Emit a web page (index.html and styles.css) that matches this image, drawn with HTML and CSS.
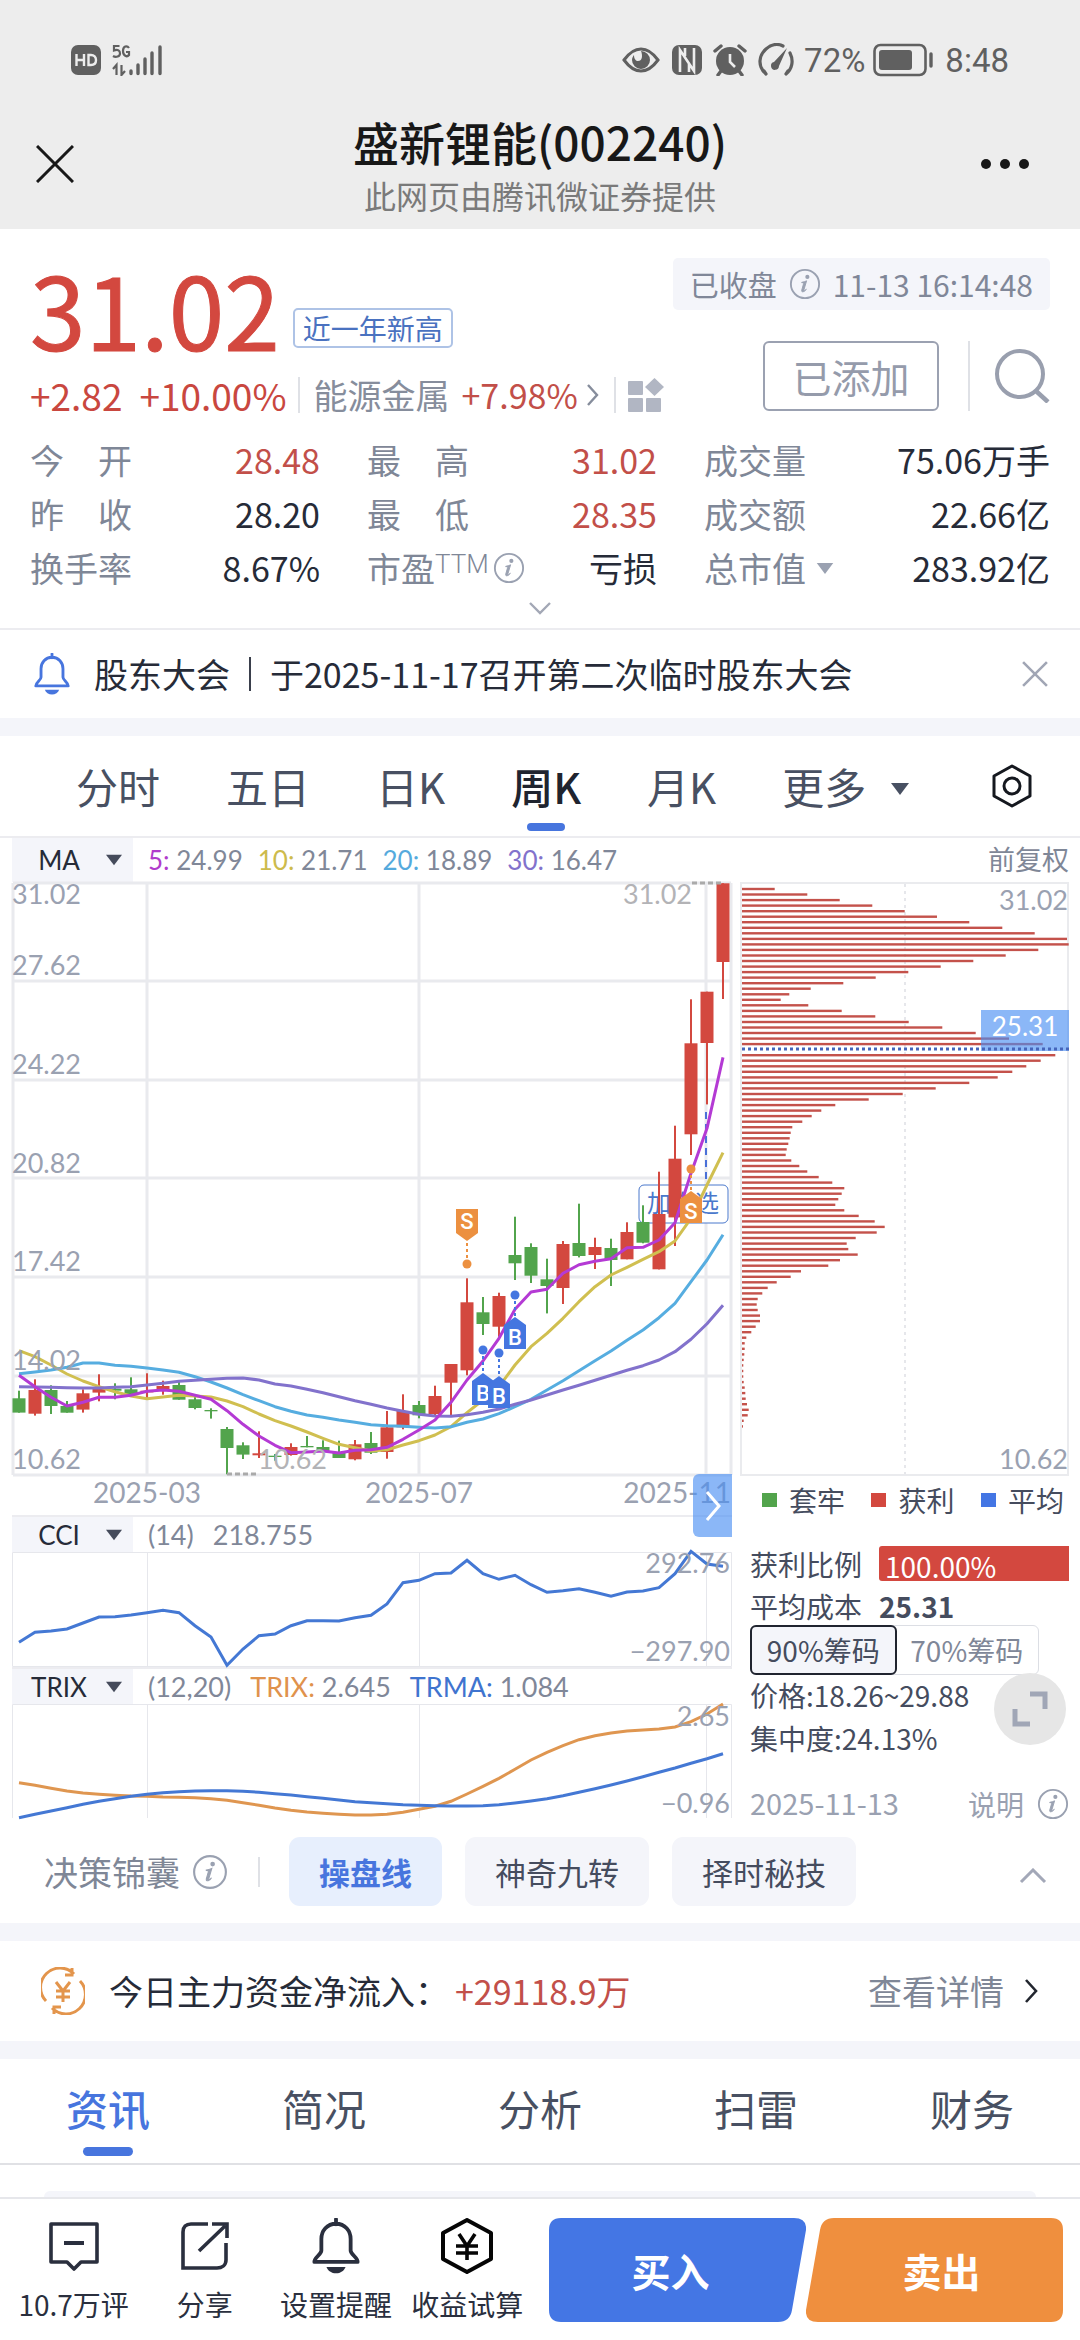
FILE: index.html
```html
<!DOCTYPE html>
<html lang="zh-CN">
<head>
<meta charset="utf-8">
<meta name="viewport" content="width=device-width">
<title>盛新锂能(002240)</title>
<link rel="stylesheet" href="styles.css">
</head>
<body>
<svg class="defs" aria-hidden="true">
  <symbol id="info" viewBox="0 0 34 34">
    <circle cx="17" cy="17" r="15" fill="none" stroke="currentColor" stroke-width="2"/>
    <circle cx="19.500" cy="9.500" r="2.200" fill="currentColor"/>
    <path d="M13.500 15.200c2-.2 3.600-.8 5.200-1.600l-2.900 9.800c-.3 1.200.6 1.200 2.600-.9-1.200 2.400-5.500 4.300-4.900 1.100l2-7c.2-.9-.6-1-2-1z" fill="currentColor" stroke="currentColor"/>
  </symbol>
  <symbol id="bell" viewBox="0 0 40 44">
    <path d="M20 1v4M20 4.500c-7 0-11.500 5.500-11.500 12v9c0 3-5.500 5.500-5.500 9h34c0-3.500-5.500-6-5.500-9v-9c0-6.500-4.500-12-11.500-12z" fill="none" stroke="currentColor" stroke-width="3" stroke-linejoin="round" stroke-linecap="round"/>
    <path d="M12.500 38.500h15c-1 3-4 5-7.500 5s-6.500-2-7.500-5z" fill="currentColor"/>
  </symbol>
  <symbol id="tri" viewBox="0 0 18 12"><path d="M0 0h18l-9 12z" fill="currentColor"/></symbol>
</svg>

<header class="top">
  <div class="status">
    <svg class="ic-hd" viewBox="0 0 30 30"><rect width="30" height="30" rx="7" fill="#606060"/><path d="M5.500 9v12M13 9v12M5.500 15H13M17.500 10v10h2.500c3 0 5-2 5-5s-2-5-5-5z" fill="none" stroke="#ededed" stroke-width="2.400"/></svg>
    <svg class="ic-signal" viewBox="0 0 50 32"><g fill="none" stroke="#606060" stroke-width="2.200"><path d="M7.500 2H2v4.500c4-1.500 6 .2 6 3s-4 4.500-7 2.500"/><path d="M17 4c-2-3-6-2-6 3s4 6.500 6 4V8h-3"/><path d="M4.500 31V21L1 25M9.500 21v10l3.500-4"/></g><g stroke="#606060" stroke-width="3.400" stroke-linecap="round"><path d="M19 27v2.500M26 21v8.500M33 15v14.500M40 9v20.500M48 3v26.500"/></g></svg>
    <div class="status-right">
      <svg class="ic-eye" viewBox="0 0 38 26"><path d="M2 13Q10 2 19 2t17 11Q28 24 19 24T2 13z" fill="none" stroke="#606060" stroke-width="3"/><path d="M19 4a9 9 0 1 1-9 9c0-2 1-4 2-5 0 4 2 6 4 6 4 0 5-5 3-10z" fill="#606060"/></svg>
      <svg class="ic-nfc" viewBox="0 0 30 30"><rect width="30" height="30" rx="7" fill="#606060"/><path d="M8 27V5l14 21V3M13 3v8M17 18v9" fill="none" stroke="#ededed" stroke-width="2.600"/></svg>
      <svg class="ic-alarm" viewBox="0 0 34 32"><circle cx="17" cy="17" r="14" fill="#606060"/><path d="M2 7l6-5M32 7l-6-5M8 27l-3 4M26 27l3 4" stroke="#606060" stroke-width="3.400" stroke-linecap="round"/><path d="M17 10v8l5 5" fill="none" stroke="#ededed" stroke-width="2.600"/></svg>
      <svg class="ic-speed" viewBox="0 0 36 34"><path d="M8 31C-1 23 1 12 8 6s13-5 17-3M32 10c4 8 2 16-4 21M6 28l2 3M30 28l-2 3" fill="none" stroke="#606060" stroke-width="3.200" stroke-linecap="round"/><path d="M29 5L16 19a4 4 0 1 0 5 4z" fill="#606060"/></svg>
      <span>72%</span>
      <svg class="ic-batt" viewBox="0 0 60 34"><rect x="1.500" y="2" width="51" height="30" rx="6" fill="none" stroke="#606060" stroke-width="2.600"/><rect x="6" y="7" width="33" height="20" rx="3" fill="#606060"/><path d="M58 11v12" stroke="#606060" stroke-width="3.400" stroke-linecap="round"/></svg>
      <span class="clock">8:48</span>
    </div>
  </div>
  <div class="nav">
    <button class="icon-btn" aria-label="关闭"><svg class="ic-close" viewBox="0 0 38 38"><path d="M1 1l36 36M37 1L1 37" stroke="#181818" stroke-width="3"/></svg></button>
    <div class="nav-title">
      <h1>盛新锂能(002240)</h1>
      <p>此网页由腾讯微证券提供</p>
    </div>
    <button class="icon-btn menu" aria-label="更多选项"><svg class="ic-dots" viewBox="0 0 50 12"><g fill="#181818"><circle cx="6" cy="6" r="5"/><circle cx="25" cy="6" r="5"/><circle cx="44" cy="6" r="5"/></g></svg></button>
  </div>
</header>

<main>
  <section class="quote">
    <div class="quote-head">
      <div class="quote-left">
        <div class="price-row"><strong class="price">31.02</strong><span class="tag">近一年新高</span></div>
        <div class="change-row">
          <span class="chg">+2.82</span><span class="chg">+10.00%</span>
          <a class="sector" href="#"><span>能源金属</span> <span class="red">+7.98%</span><svg class="ic-gt" viewBox="0 0 14 24"><path d="M2 2l9 10-9 10" fill="none" stroke="currentColor" stroke-width="2.400"/></svg></a>
          <button class="grid-btn" aria-label="板块"><svg class="ic-grid" viewBox="0 0 36 34"><g fill="#b1b6c3"><rect y="3" width="15" height="14" rx="1"/><rect y="20" width="15" height="14" rx="1"/><rect x="18" y="20" width="15" height="14" rx="1"/><path d="M26.500 0l9.500 9-9.500 9-9.500-9z"/></g></svg></button>
        </div>
      </div>
      <div class="quote-right">
        <div class="time-pill"><span>已收盘</span><svg class="ic-info"><use href="#info"/></svg><time>11-13 16:14:48</time></div>
        <div class="actions">
          <button class="added">已添加</button>
          <button class="search" aria-label="搜索"><svg class="ic-search" viewBox="0 0 56 54"><circle cx="26" cy="25" r="23" fill="none" stroke="#999fae" stroke-width="4"/><path d="M42 42l12 11" stroke="#999fae" stroke-width="4.500"/></svg></button>
        </div>
      </div>
    </div>
    <dl class="stats">
      <div><dt><span>今</span><span>开</span></dt><dd class="red">28.48</dd></div>
      <div><dt><span>最</span><span>高</span></dt><dd class="red">31.02</dd></div>
      <div><dt>成交量</dt><dd>75.06万手</dd></div>
      <div><dt><span>昨</span><span>收</span></dt><dd>28.20</dd></div>
      <div><dt><span>最</span><span>低</span></dt><dd class="red">28.35</dd></div>
      <div><dt>成交额</dt><dd>22.66亿</dd></div>
      <div><dt>换手率</dt><dd>8.67%</dd></div>
      <div><dt>市盈<sup>TTM</sup><svg class="ic-info"><use href="#info"/></svg></dt><dd>亏损</dd></div>
      <div><dt>总市值<svg class="ic-tri"><use href="#tri"/></svg></dt><dd>283.92亿</dd></div>
    </dl>
    <button class="expand" aria-label="展开"><svg class="ic-down" viewBox="0 0 22 14"><path d="M1 2l10 10L21 2" fill="none" stroke="#a3a8b6" stroke-width="2.400"/></svg></button>
  </section>

  <section class="notice">
    <svg class="ic-bell"><use href="#bell"/></svg>
    <a href="#"><span>股东大会</span><i class="bar"></i><span>于2025-11-17召开第二次临时股东大会</span></a>
    <button aria-label="关闭提醒"><svg class="ic-x" viewBox="0 0 24 24"><path d="M1 1l22 22M23 1L1 23" stroke="#a1a6b5" stroke-width="2.400"/></svg></button>
  </section>

  <div class="band"></div>

  <nav class="ktabs">
    <button>分时</button><button>五日</button><button>日K</button><button class="on">周K</button><button>月K</button>
    <button class="more">更多<svg class="ic-tri"><use href="#tri"/></svg></button>
    <button class="gear" aria-label="设置"><svg class="ic-hex" viewBox="0 0 40 44"><path d="M20 2l18 10v20L20 42 2 32V12z" fill="none" stroke="#15181f" stroke-width="3" stroke-linejoin="round"/><circle cx="20" cy="22" r="8" fill="none" stroke="#15181f" stroke-width="3"/></svg></button>
  </nav>

  <section class="charts">
    <div class="left">
      <div class="ind ind-ma">
        <label class="pick"><select aria-label="主图指标"><option>MA</option></select><svg><use href="#tri"/></svg></label>
        <span class="val"><b class="m5">5:</b> 24.99</span><span class="val"><b class="m10">10:</b> 21.71</span><span class="val"><b class="m20">20:</b> 18.89</span><span class="val"><b class="m30">30:</b> 16.47</span>
      </div>
      <div class="plot">
        <svg class="kline" viewBox="12 882 720 633">
          <g class="grid"><path d="M13 883H731M13 981H731M13 1080H731M13 1178H731M13 1277H731M13 1376H731M13 1475H731M13 883V1475M147 883V1475M419 883V1475M706 883V1475M731 883V1475"/></g>
          <rect x="639" y="1185" width="89" height="38" rx="5" fill="#fff" stroke="#4a78cc"/>
          <text x="683" y="1212" class="fav">加自选</text>
          <g id="candles"></g>
          <path d="M706 1112V1184" class="dash-blue"/>
          <g id="ma"></g>
          <g id="marks"></g>
          <path d="M692 883H722M227 1474H257" class="dash-grey"/>
          <g class="axis"><text x="12" y="904">31.02</text><text x="12" y="975">27.62</text><text x="12" y="1074">24.22</text><text x="12" y="1173">20.82</text><text x="12" y="1271">17.42</text><text x="12" y="1370">14.02</text><text x="12" y="1469">10.62</text></g>
          <g class="axis pale"><text x="692" y="904" class="end">31.02</text><text x="258" y="1469">10.62</text></g>
          <g class="axis dates"><text x="147" y="1503" class="mid">2025-03</text><text x="419" y="1503" class="mid">2025-07</text><text x="731" y="1503" class="end">2025-11</text></g>
        </svg>
        <button class="next" aria-label="下一页"><svg viewBox="0 0 18 32"><path d="M3 2l12 14L3 30" fill="none" stroke="#fff" stroke-width="3"/></svg></button>
      </div>
      <div class="ind ind-sub">
        <label class="pick"><select aria-label="副图指标一"><option>CCI</option></select><svg><use href="#tri"/></svg></label>
        <span class="val">(14)</span><span class="val">218.755</span>
      </div>
      <svg class="sub" viewBox="12 1553 720 115">
        <path class="thin" d="M12.500 1553.500H731.500V1667.500H12.500zM147.500 1553V1667M419.500 1553V1667M706.500 1553V1667"/>
        <polyline id="cci" class="blue"/>
        <g class="axis"><text x="730" y="1574" class="end">292.76</text><text x="730" y="1662" class="end">−297.90</text></g>
      </svg>
      <div class="ind ind-sub">
        <label class="pick"><select aria-label="副图指标二"><option>TRIX</option></select><svg><use href="#tri"/></svg></label>
        <span class="val">(12,20)</span><span class="val"><b class="trix">TRIX:</b> 2.645</span><span class="val"><b class="trma">TRMA:</b> 1.084</span>
      </div>
      <svg class="sub" viewBox="12 1705 720 114">
        <path class="thin" d="M12.500 1819V1705.500H731.500V1819M147.500 1705V1819M419.500 1705V1819M706.500 1705V1819"/>
        <polyline id="trix" class="orange"/>
        <polyline id="trma" class="blue"/>
        <g class="axis"><text x="730" y="1727" class="end">2.65</text><text x="730" y="1814" class="end">−0.96</text></g>
      </svg>
    </div>

    <div class="right">
      <div class="adjust">前复权</div>
      <svg class="chips" viewBox="740 882 329 594">
        <path d="M741 1475V883H1068V1475z" class="frame"/>
        <path d="M905 884V1474" class="dot-grey"/>
        <g id="chipbars"></g>
        <rect x="981" y="1010" width="88" height="41" fill="#4a8ef2" fill-opacity=".64"/>
        <path d="M742 1049H1069" class="dot-blue"/>
        <g class="axis"><text x="1068" y="910" class="end">31.02</text><text x="1068" y="1469" class="end">10.62</text></g>
        <text x="1025" y="1036" class="avg">25.31</text>
      </svg>
      <ul class="legend"><li class="g">套牢</li><li class="r">获利</li><li class="b">平均</li></ul>
      <div class="info-row ratio"><span>获利比例</span><span class="fill">100.00%</span></div>
      <div class="info-row cost"><span>平均成本</span><strong>25.31</strong></div>
      <div class="seg"><button class="on">90%筹码</button><button>70%筹码</button></div>
      <div class="info-row line">价格:18.26~29.88</div>
      <div class="info-row line">集中度:24.13%</div>
      <div class="foot"><time>2025-11-13</time><a href="#">说明<svg class="ic-info"><use href="#info"/></svg></a></div>
      <button class="full" aria-label="全屏"><svg viewBox="0 0 36 36"><path d="M18 3h15v15M3 18v15h15" fill="none" stroke="#a0a6b6" stroke-width="5"/></svg></button>
    </div>
  </section>

  <section class="decide">
    <span class="decide-title">决策锦囊<svg class="ic-info"><use href="#info"/></svg></span>
    <button class="chip on">操盘线</button><button class="chip">神奇九转</button><button class="chip">择时秘技</button>
    <button class="fold" aria-label="收起"><svg viewBox="0 0 28 16"><path d="M2 14L14 2l12 12" fill="none" stroke="#a3a8b8" stroke-width="3"/></svg></button>
  </section>

  <div class="band"></div>

  <section class="flow">
    <svg class="ic-yen" viewBox="0 0 44 48"><g fill="none" stroke="#e3954c" stroke-width="3"><path d="M5 34A19 19 0 0 1 33 7M31 1v7h-7M39 14A19 19 0 0 1 11 41M13 47v-7h7"/><path d="M15 15l7 9 7-9M22 24v11M15 24h14M15 30h14"/></g></svg>
    <span>今日主力资金净流入：</span><span class="red amount">+29118.9万</span>
    <a href="#">查看详情<svg class="ic-gt" viewBox="0 0 14 24"><path d="M2 1l10 11L2 23" fill="none" stroke="#22262f" stroke-width="2.600"/></svg></a>
  </section>

  <div class="band"></div>

  <nav class="tabs"><button class="on">资讯</button><button>简况</button><button>分析</button><button>扫雷</button><button>财务</button></nav>
  <section class="card"></section>
</main>

<footer class="bottom">
  <nav>
    <button><svg viewBox="0 0 52 56"><path d="M3 6h46v38H33l-7 7-7-7H3z" fill="none" stroke="#2a2f3e" stroke-width="3.600" stroke-linejoin="round"/><path d="M16 25h20" stroke="#2a2f3e" stroke-width="4"/></svg>10.7万评</button>
    <button><svg viewBox="0 0 52 56"><path d="M29 6H12c-5 0-8 3-8 8v36h34c5 0 9-3 9-8V25M20 33L46 8M33 6h15v14" fill="none" stroke="#2a2f3e" stroke-width="3.600"/></svg>分享</button>
    <button><svg viewBox="0 0 40 44"><use href="#bell"/></svg>设置提醒</button>
    <button><svg viewBox="0 0 52 56"><path d="M26 2l24 13v26L26 54 2 41V15z" fill="none" stroke="#050505" stroke-width="4" stroke-linejoin="round"/><path d="M18 16l8 12 8-12M26 28v14M15 28h22M15 35h22" fill="none" stroke="#050505" stroke-width="3.600"/></svg>收益试算</button>
  </nav>
  <div class="trade">
    <button class="buy"><svg viewBox="0 0 257 104" preserveAspectRatio="none"><path d="M12 0h233q13 0 12 12l-14 80q-2 12-14 12H12q-12 0-12-12V12Q0 0 12 0z" fill="#4476e4"/></svg><span>买入</span></button>
    <button class="sell"><svg viewBox="0 0 257 104" preserveAspectRatio="none"><path d="M28 0h217q12 0 12 12v80q0 12-12 12H12Q-1 104 0 92L14 12Q16 0 28 0z" fill="#ef8f3e"/></svg><span>卖出</span></button>
  </div>
</footer>
<script src="chart.js"></script>
</body>
</html>
```

FILE: styles.css
```css
* { box-sizing: border-box; margin: 0; padding: 0; }
body {
  min-height: 100vh;
  display: flex;
  flex-direction: column;
  background: #fff;
  color: #262b38;
  font: 34px/1 "Noto Sans CJK SC", sans-serif;
}
button, select { font: inherit; color: inherit; background: none; border: 0; }
button, a { display: flex; align-items: center; justify-content: center; white-space: nowrap; }
a { color: inherit; text-decoration: none; }
svg { display: block; flex: none; }
.defs { position: absolute; width: 0; height: 0; }
.red { color: #c24f49; }

/* header */
.top { background: #ededed; height: 229px; flex: none; }
.status { height: 115px; padding: 5px 71px 0; display: flex; align-items: center; color: #606060; font: 33px/1 Roboto, sans-serif; }
.status-right { margin-left: auto; display: flex; align-items: center; }
.ic-hd { width: 30px; height: 30px; margin-right: 11px; }
.ic-signal { width: 50px; height: 32px; }
.ic-eye { width: 38px; height: 26px; margin-right: 12px; }
.ic-nfc { width: 30px; height: 30px; margin-right: 11px; }
.ic-alarm { width: 34px; height: 32px; margin-right: 11px; }
.ic-speed { width: 36px; height: 34px; margin-right: 10px; }
.ic-batt { width: 60px; height: 34px; margin: 0 12px 0 8px; }
.nav { display: flex; align-items: flex-start; justify-content: space-between; padding: 0 36px; }
.icon-btn { height: 98px; width: 64px; justify-content: flex-start; }
.menu { justify-content: flex-end; padding-right: 14px; }
.ic-close { width: 38px; height: 38px; }
.ic-dots { width: 50px; height: 12px; }
.nav-title { text-align: center; }
.nav-title h1 { font-size: 46px; font-weight: 500; line-height: 52px; margin-bottom: 8px; color: #181818; }
.nav-title p { font-size: 32px; line-height: 40px; color: #7a7a7a; }

main { flex: 1; display: flex; flex-direction: column; }

/* quote */
.quote { padding: 29px 30px 0; border-bottom: 2px solid #ececf0; }
.quote-head { display: flex; justify-content: space-between; height: 175px; }
.price-row { display: flex; align-items: flex-end; height: 100px; gap: 13px; }
.price { font-size: 100px; font-weight: 400; color: #d3483f; line-height: 100px; -webkit-text-stroke: 1px #d3483f; }
.tag { font-size: 28px; line-height: 36px; margin-bottom: 10px; padding: 0 8px; border: 2px solid #aec3e6; border-radius: 5px; color: #4a72c0; }
.change-row { display: flex; align-items: center; height: 74px; color: #868d9c; }
.chg { font-size: 37px; color: #c9473f; margin-right: 17px; }
.chg + .chg { margin-right: 12px; }
.sector { border: 0 solid #dfe1e6; border-width: 0 2px; padding: 0 14px 0 13px; gap: 12px; height: 36px; }
.ic-gt { width: 14px; height: 24px; }
.sector .ic-gt { margin-left: -4px; }
.grid-btn { padding-left: 12px; }
.ic-grid { width: 36px; height: 34px; }
.quote-right { display: flex; flex-direction: column; align-items: flex-end; gap: 31px; }
.time-pill { display: flex; align-items: center; gap: 12px; height: 52px; padding: 0 17px; background: #f4f5fa; border-radius: 5px; font-size: 29px; color: #808798; }
.time-pill time { font-size: 30px; }
.ic-info { width: 32px; height: 32px; color: #9aa1b1; }
.actions { display: flex; align-items: center; }
.added { width: 176px; height: 70px; border: 2px solid #9ba1b1; border-radius: 6px; font-size: 39px; color: #959bab; margin-right: 29px; }
.search { border-left: 2px solid #dfe1e6; height: 70px; padding-left: 24px; }
.ic-search { width: 56px; height: 54px; }
.stats { display: grid; grid-template-columns: 290fr 290fr 346fr; column-gap: 47px; }
.stats div { display: flex; align-items: center; justify-content: space-between; height: 54px; }
.stats dt { display: flex; align-items: center; justify-content: space-between; min-width: 102px; color: #7f8797; }
.stats sup { font: 26px/1 Roboto, sans-serif; font-weight: 300; align-self: flex-start; }
.stats .ic-info { margin-left: 4px; }
.stats .ic-tri { width: 18px; height: 11px; margin-left: 10px; color: #9aa1b1; }
.expand { width: 100%; height: 33px; padding-bottom: 8px; }
.ic-down { width: 22px; height: 14px; }

.notice { display: flex; align-items: center; height: 88px; padding: 0 32px; flex: none; }
.ic-bell { width: 40px; height: 42px; color: #4775de; margin-right: 22px; }
.notice button { margin-left: auto; }
.bar { width: 2px; height: 34px; background: #3a3f4c; margin: 0 19px; }
.ic-x { width: 26px; height: 26px; }
.band { height: 18px; background: #f4f5fa; flex: none; }

/* period tabs */
.ktabs { display: flex; align-items: stretch; gap: 66px; height: 102px; padding: 0 48px 0 76px; border-bottom: 2px solid #ececf0; flex: none; font-size: 42px; color: #485062; }
.ktabs button { position: relative; }
.ktabs .on { color: #20242f; font-weight: 500; }
.ktabs .on::after { content: ""; position: absolute; bottom: 5px; left: 50%; margin-left: -19px; width: 38px; height: 8px; border-radius: 4px; background: #4775de; }
.ktabs .ic-tri { width: 20px; height: 12px; margin: 6px 0 0 24px; }
.ktabs .gear { margin-left: auto; }
.ic-hex { width: 40px; height: 44px; }

/* charts */
.charts { display: grid; grid-template-columns: 720fr 329fr; column-gap: 8px; padding: 0 11px 0 12px; }
.left, .right { min-width: 0; position: relative; }
.left > svg, .kline, .chips { width: 100%; height: auto; overflow: visible; }
.ind { display: flex; align-items: center; gap: 15px; font: 26px/1 Lato, sans-serif; color: #808798; }
.ind-ma { height: 44px; }
.ind-sub { height: 37px; border-top: 2px solid #ececf0; gap: 19px; }
.ind b { font-weight: 400; }
.val { white-space: nowrap; }
.ind-sub .val { font-size: 27px; }
.pick { position: relative; width: 121px; height: 100%; background: #f4f5fa; color: #262b38; }
.ind-sub .pick { margin-right: -4px; }
.pick select { width: 100%; height: 100%; appearance: none; padding: 0 27px 0 0; text-align-last: center; }
.pick svg { position: absolute; right: 11px; top: 50%; margin-top: -6px; width: 16px; height: 12px; color: #454b5b; pointer-events: none; }
.m5 { color: #b03ccc; } .m10 { color: #cdbb4c; } .m20 { color: #55aadd; } .m30 { color: #8272cc; }
.trix { color: #e0924c; } .trma { color: #3f74cf; }
.plot { position: relative; }
.grid path { fill: none; stroke: #e9eaee; stroke-width: 3; }
.thin { fill: none; stroke: #e6e7ec; }
.axis text { font: 27px Lato, sans-serif; fill: #9aa1b1; }
.dates text { font-size: 28px; }
.pale text { fill: #b3b3b6; }
.axis .end { text-anchor: end; }
.axis .mid { text-anchor: middle; }
.fav { font-size: 24px; fill: #4a78cc; text-anchor: middle; }
.blue, .orange { fill: none; stroke: #4478d4; stroke-width: 3; }
.orange { stroke: #df9650; }
.dash-blue { stroke: #4a70d8; stroke-width: 2; stroke-dasharray: 7 5; }
.dash-grey { stroke: #aaa; stroke-width: 3; stroke-dasharray: 5 3; }
.frame { fill: none; stroke: #eaebee; stroke-width: 2; }
.dot-grey { stroke: #e6e7eb; stroke-width: 2; stroke-dasharray: 3 4; }
.dot-blue { stroke: #4565bb; stroke-width: 3; stroke-dasharray: 3 3; }
.avg { font: 26px Lato, sans-serif; fill: #fff; text-anchor: middle; }
.mark { font: 22px Roboto, sans-serif; font-weight: 500; fill: #fff; text-anchor: middle; }
.next { position: absolute; right: 0; bottom: -22px; width: 39px; height: 63px; border-radius: 6px 0 0 6px; background: rgba(74, 142, 242, .64); z-index: 1; }
.next svg { width: 18px; height: 32px; }

/* chip distribution */
.right { font-size: 28px; color: #454c5e; }
.adjust { height: 44px; line-height: 42px; text-align: right; font-size: 27px; color: #7f8797; }
.legend { display: flex; justify-content: space-between; list-style: none; height: 48px; padding: 0 5px 0 22px; }
.legend li { display: flex; align-items: center; gap: 12px; }
.legend li::before { content: ""; width: 15px; height: 14px; background: currentColor; }
.legend .g::before { background: #52a44c; }
.legend .r::before { background: #d3483f; }
.legend .b::before { background: #4476e4; }
.info-row { display: flex; align-items: center; padding-left: 10px; }
.ratio { height: 35px; margin-top: 22px; }
.fill { flex: 1; height: 35px; line-height: 40px; margin-left: 17px; padding-left: 6px; border-radius: 3px 0 0 3px; background: #d3483f; color: #fff; }
.cost { height: 44px; gap: 17px; padding-top: 6px; }
.seg { display: flex; margin-left: 10px; width: 289px; border: 1px solid #dcdee4; border-radius: 6px; font-size: 28px; color: #808798; }
.seg button { flex: 1; height: 48px; }
.seg .on { margin: -1px; border: 2px solid #20242f; border-radius: 6px; height: 50px; background: #f4f5fa; color: #454c5e; }
.line { height: 43px; padding-bottom: 4px; }
.foot { display: flex; justify-content: space-between; margin-top: 27px; padding-left: 10px; color: #9aa1b1; font-size: 29px; }
.foot a { gap: 13px; font-size: 28px; }
.full { position: absolute; right: 3px; bottom: 75px; width: 72px; height: 72px; border-radius: 50%; background: #e6e6e6; }
.full svg { width: 36px; height: 36px; }

/* decision bar */
.decide { display: flex; align-items: center; gap: 23px; height: 103px; padding: 0 32px 0 44px; flex: none; font-size: 31px; color: #454c5e; }
.decide-title { display: flex; align-items: center; gap: 12px; font-size: 34px; color: #7f8797; padding-right: 32px; margin-right: 6px; position: relative; }
.decide-title::after { content: ""; position: absolute; right: 0; top: 3px; bottom: 3px; border-right: 2px solid #dfe1e6; }
.decide-title .ic-info { width: 36px; height: 36px; }
.chip { height: 69px; padding: 0 30px; border-radius: 11px; background: #f4f5fa; }
.chip.on { background: #e7effd; color: #4775de; font-weight: 700; }
.fold { margin: 8px 0 0 auto; }
.fold svg { width: 30px; height: 16px; }

.flow { display: flex; align-items: center; height: 100px; padding: 0 42px 0 41px; flex: none; }
.ic-yen { width: 44px; height: 48px; margin-right: 24px; }
.amount { margin-left: 6px; }
.flow a { margin-left: auto; gap: 20px; color: #7f8797; }

.tabs { display: grid; grid-template-columns: repeat(5, 1fr); height: 106px; border-bottom: 2px solid #e0e1e5; font-size: 42px; color: #485062; flex: none; }
.tabs button { position: relative; padding-bottom: 7px; }
.tabs .on { color: #4775de; font-weight: 500; }
.tabs .on::after { content: ""; position: absolute; bottom: 7px; left: 50%; margin-left: -25px; width: 50px; height: 9px; border-radius: 5px; background: #4775de; }
.card { flex: 1; min-height: 6px; margin: 26px 44px 0; background: #f4f5fa; border-radius: 12px 12px 0 0; }

/* bottom bar */
.bottom { display: grid; grid-template-columns: 525fr 514fr; column-gap: 16px; padding: 19px 17px 19px 8px; border-top: 2px solid #e6e7eb; flex: none; }
.bottom nav { display: grid; grid-template-columns: repeat(4, 1fr); font-size: 28px; color: #2a2f3e; }
.bottom nav button { flex-direction: column; justify-content: flex-start; gap: 16px; }
.bottom nav svg { width: 52px; height: 56px; }
.trade { display: grid; grid-template-columns: 1fr 1fr; height: 104px; font-size: 39px; font-weight: 700; color: #fff; }
.trade button { position: relative; }
.trade svg { position: absolute; inset: 0; width: 100%; height: 100%; }
.trade span { position: relative; }
.buy { padding-right: 14px; }
.sell { padding-left: 14px; }
```

FILE: chart.js
```js
const RED = '#d3483f', GREEN = '#52a44c';
const x = i => 19 + 16 * i;
const r1 = v => Math.round(v * 10) / 10;
// series values are stored in thirds of a chart unit, counted from a base line
const main = v => r1(1190 + v / 3), sub = v => r1(1500 + v / 3);
const line = (vals, y) => vals.map((v, i) => x(i) + ',' + y(v)).join(' ');

// [colour, body top, body bottom, wick top, wick bottom]
const candles = [
  ['g',625,668,602,668],['r',600,671,568,677],['g',600,648,586,672],['g',648,668,633,668],['r',610,659,598,668],
  ['r',592,608,553,634],['g',596,602,580,628],['g',598,612,562,612],['r',602,607,550,626],['r',588,602,572,614],
  ['g',585,629,572,629],['g',628,654,612,658],['g',660,664,655,686],['g',717,774,711,853],['g',766,794,757,807],
  ['r',790,796,724,804],['g',797,801,792,812],['r',771,795,760,797],['g',768,772,738,772],['g',771,783,751,783],
  ['g',787,804,752,804],['r',763,808,750,811],['g',759,788,726,792],['r',712,786,663,806],['r',663,712,613,718],
  ['g',645,676,633,685],['r',618,672,587,676],['r',522,578,522,676],['r',337,541,265,556],['g',367,402,321,435],
  ['r',318,410,308,440],['g',195,220,80,270],['g',171,257,160,279],['g',268,288,206,370],['r',162,294,153,342],
  ['g',159,198,41,202],['r',171,195,143,237],['g',174,210,146,288],['r',126,208,97,208],['g',96,158,46,160],
  ['r',72,238,-55,238],['r',-94,82,-193,168],['r',-440,-167,-572,-105],['r',-595,-441,-595,-257],['r',-920,-684,-920,-573]
];
document.getElementById('candles').innerHTML = candles.map(([c, t, b, wt, wb], i) => {
  const col = c === 'r' ? RED : GREEN;
  return `<rect x="${x(i) - 1}" y="${main(wt)}" width="2" height="${r1((wb - wt) / 3)}" fill="${col}"/>` +
    `<rect x="${x(i) - 6.5}" y="${main(t)}" width="13" height="${r1((b - t) / 3)}" fill="${col}"/>`;
}).join('');

const ma = {
  '#d0bf50': [482,500,525,552,573,590,605,618,626,621,616,618,621,633,650,672,692,708,726,745,763,773,783,779,765,752,735,710,668,630,590,525,470,430,385,335,290,255,232,208,185,153,85,-15,-112],
  '#56ade0': [551,546,540,532,519,519,526,529,534,540,547,560,576,594,614,632,650,664,675,682,690,697,704,707,709,712,714,710,697,687,671,650,628,600,572,542,512,483,451,420,383,340,275,210,134],
  '#8272cc': [590,591,592,593,594,594,592,590,585,580,574,571,568,565,564,570,582,588,598,608,620,632,643,654,664,673,678,679,674,667,657,643,630,615,600,586,571,556,541,527,510,485,448,401,346],
  '#b43ad4': [556,590,622,648,637,622,622,616,604,600,604,616,628,662,703,738,766,788,786,783,789,781,779,772,748,720,690,637,570,513,445,358,306,298,250,224,214,206,173,172,150,98,-50,-185,-398]
};
document.getElementById('ma').innerHTML = Object.entries(ma).map(([c, v]) =>
  `<polyline points="${line(v, main)}" fill="none" stroke="${c}" stroke-width="3" stroke-linejoin="round"/>`).join('');

// trade marks: letter, centre x, tip y, dot y
const marks = [['S', 467, 1241, 1264], ['S', 691, 1191, 1169], ['B', 515, 1317, 1295], ['B', 483, 1373, 1350], ['B', 499, 1376, 1353]];
document.getElementById('marks').innerHTML = marks.map(([l, cx, tip, dot]) => {
  const up = l === 'S' && tip < dot;
  const d = up ? -1 : 1, c = l === 'S' ? '#ec9040' : '#4476e0';
  return `<path d="M${cx} ${dot}V${tip}" stroke="${c}" stroke-width="2" stroke-dasharray="3 3"/>` +
    `<circle cx="${cx}" cy="${dot}" r="4.5" fill="${c}"/>` +
    `<path d="M${cx} ${tip}l11 ${8 * d}v${24 * d}h-22v${-24 * d}z" fill="${c}"/>` +
    `<text class="mark" x="${cx}" y="${tip + (d > 0 ? 28 : -12)}">${l}</text>`;
}).join('');

const set = (id, v) => document.getElementById(id).setAttribute('points', line(v, sub));
set('cci', [430,400,396,390,372,354,353,348,341,334,341,380,414,499,450,410,405,380,365,365,366,356,349,315,251,244,224,222,184,224,241,229,257,280,275,269,280,292,279,276,266,224,157,195,202]);
set('trix', [851,859,868,876,882,886,889,891,892,894,895,896,899,904,911,919,927,934,939,943,946,948,948,946,940,931,922,907,885,862,838,811,783,760,740,722,710,702,696,693,690,684,668,645,615]);
set('trma', [956,946,936,926,916,907,899,892,886,881,878,876,875,875,877,880,884,888,893,898,903,908,911,914,917,919,920,921,921,920,917,912,906,899,890,880,869,858,846,833,820,807,793,779,764]);

// holdings per price level, top to bottom; the average-cost level has no bar
const chips = [135,233,330,428,525,622,719,818,915,1012,1017,926,828,731,633,536,438,341,243,179,153,236,336,437,537,638,738,838,939,37,
  977,933,890,848,804,719,618,519,417,317,275,246,218,188,183,180,176,171,168,185,209,233,267,308,344,336,326,317,344,387,435,465,441,378,351,356,384,331,296,214,
  183,141,114,98,84,81,84,91,91,78,65,50,45,45,44,42,41,41,41,42,45,47,48,52,57,54,42,40];
document.getElementById('chipbars').innerHTML = chips.map((v, i) =>
  `<rect x="742" y="${r1(887.8 + 5.54 * i)}" width="${r1((v - 37) / 3)}" height="2.4" fill="#c4524b"/>`).join('');
```
